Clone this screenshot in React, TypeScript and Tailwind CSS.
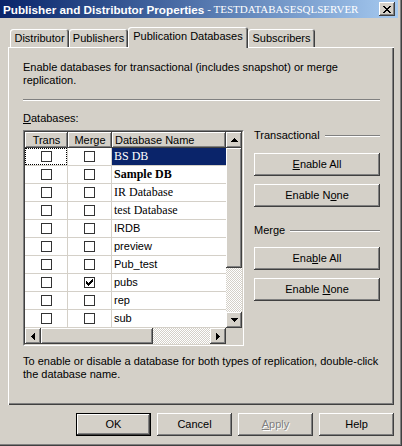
import React from "react";

const raised =
  "shadow-[inset_-1px_-1px_#404040,inset_1px_1px_#ffffff,inset_-2px_-2px_#808080,inset_2px_2px_#d4d0c8]";
const checker =
  "bg-[image:repeating-conic-gradient(#ffffff_0_25%,#d4d0c8_0_50%)] bg-[length:2px_2px]";

function Tri({ dir }: { dir: "up" | "down" | "left" | "right" }) {
  const rects: React.ReactNode[] = [];
  for (let i = 0; i < 4; i++) {
    if (dir === "up") rects.push(<rect key={i} x={3 - i} y={i} width={2 * i + 1} height={1} />);
    if (dir === "down") rects.push(<rect key={i} x={i} y={i} width={7 - 2 * i} height={1} />);
    if (dir === "left") rects.push(<rect key={i} x={i} y={3 - i} width={1} height={2 * i + 1} />);
    if (dir === "right") rects.push(<rect key={i} x={i} y={i} width={1} height={7 - 2 * i} />);
  }
  const v = dir === "up" || dir === "down";
  return (
    <svg width={v ? 7 : 4} height={v ? 4 : 7} viewBox={v ? "0 0 7 4" : "0 0 4 7"} shapeRendering="crispEdges" fill="#000">
      {rects}
    </svg>
  );
}

function ArrowBtn({ dir }: { dir: "up" | "down" | "left" | "right" }) {
  return (
    <div className={`w-[16px] h-[16px] shrink-0 bg-[#d4d0c8] flex items-center justify-center ${raised}`}>
      <Tri dir={dir} />
    </div>
  );
}

function CloseGlyph() {
  const rows = ["11000011", "01100110", "00111100", "00011000", "00111100", "01100110", "11000011"];
  return (
    <svg width="8" height="7" viewBox="0 0 8 7" shapeRendering="crispEdges" fill="#000">
      {rows.flatMap((r, y) =>
        r.split("").map((c, x) => (c === "1" ? <rect key={`${x}-${y}`} x={x} y={y} width={1} height={1} /> : null))
      )}
    </svg>
  );
}

function CheckGlyph() {
  const rows = ["0000001", "0000011", "1000111", "1101110", "1111100", "0111000", "0010000"];
  return (
    <svg width="7" height="7" viewBox="0 0 7 7" shapeRendering="crispEdges" fill="#000">
      {rows.flatMap((r, y) =>
        r.split("").map((c, x) => (c === "1" ? <rect key={`${x}-${y}`} x={x} y={y} width={1} height={1} /> : null))
      )}
    </svg>
  );
}

function Check({ on }: { on?: boolean }) {
  return (
    <div className="w-[11px] h-[11px] border border-[#333333] bg-white flex items-center justify-center">
      {on ? <CheckGlyph /> : null}
    </div>
  );
}

type Row = { name: string; serif?: boolean; bold?: boolean; sel?: boolean; m?: boolean };
const rows: Row[] = [
  { name: "BS DB", serif: true, sel: true },
  { name: "Sample DB", serif: true, bold: true },
  { name: "IR Database", serif: true },
  { name: "test Database", serif: true },
  { name: "IRDB" },
  { name: "preview" },
  { name: "Pub_test" },
  { name: "pubs", m: true },
  { name: "rep" },
  { name: "sub" },
];

function Btn({ children }: { children: React.ReactNode }) {
  return (
    <div className={`h-[23px] w-full flex items-center justify-center bg-[#d4d0c8] ${raised}`}>{children}</div>
  );
}

function GroupLabel({ text }: { text: string }) {
  return (
    <div className="h-[13px] flex items-center">
      <span className="whitespace-nowrap">{text}</span>
      <div className="flex-1 ml-[5px] h-[2px] border-t border-t-[#808080] border-b border-b-white" />
    </div>
  );
}

export default function App() {
  return (
    <div className="w-[402px] h-[446px] bg-[#d4d0c8] relative overflow-hidden font-['Liberation_Sans',Arial,sans-serif] text-[11px] leading-[13px] text-black shadow-[inset_-1px_-1px_#404040,inset_-2px_-2px_#808080]">
      {/* Title bar */}
      <div className="h-[18px] w-[398px] flex items-center bg-linear-to-r from-[#0a246a] to-[#a6caf0] pl-[3px] pr-[3px]">
        <span className="font-bold text-white whitespace-nowrap text-[11.7px]">Publisher and Distributor Properties</span>
        <span className="text-white whitespace-nowrap font-['Liberation_Serif','Times_New_Roman',serif] text-[11px] ml-[3px]">
          - TESTDATABASESQLSERVER
        </span>
        <div className={`ml-auto w-[16px] h-[14px] bg-[#d4d0c8] flex items-center justify-center ${raised}`}>
          <CloseGlyph />
        </div>
      </div>

      <div className="px-[8px] pt-[9px]">
        {/* Tabs */}
        <div className="flex items-end h-[21px] pl-[2px] relative z-10">
          <div className="w-[59px] h-[18px] mb-[1px] flex items-center justify-center rounded-t-[3px] shadow-[inset_1px_1px_#ffffff,inset_-1px_0_#404040,inset_-2px_0_#808080]">
            Distributor
          </div>
          <div className="w-[59px] h-[18px] mb-[1px] flex items-center justify-center rounded-t-[3px] shadow-[inset_1px_1px_#ffffff,inset_-1px_0_#404040,inset_-2px_0_#808080]">
            Publishers
          </div>
          <div className="w-[120px] h-[21px] flex items-start pt-[3px] justify-center bg-[#d4d0c8] rounded-t-[3px] shadow-[inset_1px_1px_#ffffff,inset_-1px_0_#404040,inset_-2px_0_#808080]">
            Publication Databases
          </div>
          <div className="w-[67px] h-[18px] mb-[1px] flex items-center justify-center rounded-t-[3px] shadow-[inset_1px_1px_#ffffff,inset_-1px_0_#404040,inset_-2px_0_#808080]">
            Subscribers
          </div>
        </div>

        {/* Panel */}
        <div className="-mt-[1px] h-[358px] w-[386px] pl-[15px] pt-[14px] shadow-[inset_1px_1px_#ffffff,inset_-1px_-1px_#404040,inset_-2px_-2px_#808080]">
          <div className="w-[330px]">
            Enable databases for transactional (includes snapshot) or merge replication.
          </div>
          <div className="mt-[12px] w-[357px] h-[2px] border-t border-t-[#808080] border-b border-b-white" />
          <div className="mt-[11px]">
            <span className="underline underline-offset-[1px]">D</span>atabases:
          </div>

          <div className="mt-[5px] flex gap-[10px]">
            {/* List */}
            <div className="w-[221px] h-[216px] border border-t-[#808080] border-l-[#808080] border-r-white border-b-white">
              <div className="w-[219px] h-[214px] border border-t-[#404040] border-l-[#404040] border-r-[#d4d0c8] border-b-[#d4d0c8] bg-white flex flex-col">
                <div className="flex h-[196px]">
                  <div className="w-[201px] flex flex-col">
                    <div className="flex h-[16px]">
                      <div className={`w-[43px] h-[16px] bg-[#d4d0c8] flex items-center justify-center ${raised}`}>Trans</div>
                      <div className={`w-[44px] h-[16px] bg-[#d4d0c8] flex items-center justify-center ${raised}`}>Merge</div>
                      <div className={`w-[114px] h-[16px] bg-[#d4d0c8] flex items-center pl-[3px] whitespace-nowrap ${raised}`}>
                        Database Name
                      </div>
                    </div>
                    {rows.map((r, i) => (
                      <div key={r.name} className="flex h-[18px] border-b border-b-[#d4d0c8]">
                        <div className="w-[43px] h-[17px] border-r border-r-[#d4d0c8] flex items-center justify-center relative">
                          <Check />
                          {i === 0 ? <span className="absolute inset-0 border border-dotted border-black" /> : null}
                        </div>
                        <div className="w-[44px] h-[17px] border-r border-r-[#d4d0c8] flex items-center justify-center">
                          <Check on={r.m} />
                        </div>
                        <div
                          className={`w-[114px] h-[17px] flex items-center pl-[2px] whitespace-nowrap ${
                            r.sel ? "bg-[#0a246a] text-white" : ""
                          } ${r.serif ? "font-['Liberation_Serif','Times_New_Roman',serif] text-[12px]" : ""} ${
                            r.bold ? "font-bold" : ""
                          }`}
                        >
                          {r.name}
                        </div>
                      </div>
                    ))}
                  </div>
                  <div className="w-[16px] flex flex-col">
                    <ArrowBtn dir="up" />
                    <div className={`h-[120px] bg-[#d4d0c8] ${raised}`} />
                    <div className={`h-[44px] ${checker}`} />
                    <ArrowBtn dir="down" />
                  </div>
                </div>
                <div className="flex h-[16px]">
                  <ArrowBtn dir="left" />
                  <div className={`w-[112px] h-[16px] bg-[#d4d0c8] ${raised}`} />
                  <div className={`w-[57px] h-[16px] ${checker}`} />
                  <ArrowBtn dir="right" />
                  <div className="w-[16px] h-[16px] bg-[#d4d0c8]" />
                </div>
              </div>
            </div>

            {/* Right column */}
            <div className="w-[126px] -mt-[1px]">
              <GroupLabel text="Transactional" />
              <div className="mt-[11px]">
                <Btn>
                  <span>
                    <span className="underline underline-offset-[1px]">E</span>nable All
                  </span>
                </Btn>
              </div>
              <div className="mt-[8px]">
                <Btn>
                  <span>
                    Enable N<span className="underline underline-offset-[1px]">o</span>ne
                  </span>
                </Btn>
              </div>
              <div className="mt-[17px]">
                <GroupLabel text="Merge" />
              </div>
              <div className="mt-[10px]">
                <Btn>
                  <span>
                    Ena<span className="underline underline-offset-[1px]">b</span>le All
                  </span>
                </Btn>
              </div>
              <div className="mt-[8px]">
                <Btn>
                  <span>
                    Enable <span className="underline underline-offset-[1px]">N</span>one
                  </span>
                </Btn>
              </div>
            </div>
          </div>

          <div className="mt-[9px] w-[360px]">
            To enable or disable a database for both types of replication, double-click the database name.
          </div>
        </div>

        {/* Bottom buttons */}
        <div className="mt-[8px] w-[386px] flex justify-end gap-[6px]">
          <div className="w-[75px] h-[23px] flex items-center justify-center shadow-[inset_0_0_0_1px_#000000,inset_-2px_-2px_#404040,inset_2px_2px_#ffffff,inset_-3px_-3px_#808080]">
            OK
          </div>
          <div className={`w-[75px] h-[23px] flex items-center justify-center ${raised}`}>Cancel</div>
          <div className={`w-[75px] h-[23px] flex items-center justify-center text-[#808080] [text-shadow:1px_1px_0_#ffffff] ${raised}`}>
            <span>
              <span className="underline underline-offset-[1px]">A</span>pply
            </span>
          </div>
          <div className={`w-[75px] h-[23px] flex items-center justify-center ${raised}`}>Help</div>
        </div>
      </div>
    </div>
  );
}
